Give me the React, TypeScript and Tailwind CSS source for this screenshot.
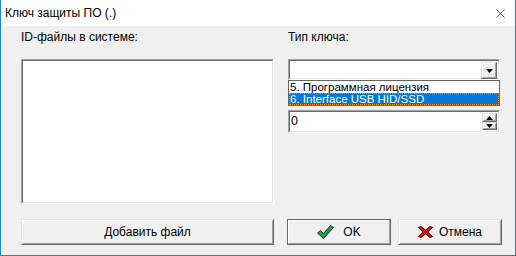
import { X } from 'lucide-react';

// classic win32 sunken / raised frames
function Sunken({ className, children }: { className: string; children?: React.ReactNode }) {
  return (
    <div className={`border border-t-[#a0a0a0] border-l-[#a0a0a0] border-b-white border-r-white ${className}`}>
      <div className="h-full w-full border border-t-[#696969] border-l-[#696969] border-b-[#e3e3e3] border-r-[#e3e3e3] bg-white">
        {children}
      </div>
    </div>
  );
}

function Raised({ className, children }: { className: string; children?: React.ReactNode }) {
  return (
    <div className={`border border-t-[#e3e3e3] border-l-[#e3e3e3] border-b-[#696969] border-r-[#696969] bg-[#f0f0f0] ${className}`}>
      <div className="flex h-full w-full items-center justify-center border border-t-white border-l-white border-b-[#a0a0a0] border-r-[#a0a0a0]">
        {children}
      </div>
    </div>
  );
}

function CheckIcon() {
  return (
    <svg width="17" height="14" viewBox="0 0 17 14">
      <polygon points="0.5,8 3.5,5.5 6.5,8.5 13.5,0.5 16.5,2.5 6.5,13.5" fill="#1fa52a" stroke="#16235e" strokeWidth="1" strokeLinejoin="round" />
    </svg>
  );
}

function CrossIcon() {
  return (
    <svg width="15" height="12" viewBox="0 0 15 12">
      <polygon
        points="0.5,1.5 3,0.5 7.5,4 12,0.5 14.5,1.5 10,6 14.5,10.5 12,11.5 7.5,8 3,11.5 0.5,10.5 5,6"
        fill="#d41414"
        stroke="#5c0a0a"
        strokeWidth="1"
        strokeLinejoin="round"
      />
    </svg>
  );
}

function Arrow({ up }: { up?: boolean }) {
  return (
    <svg width="7" height="4" viewBox="0 0 7 4">
      <polygon points={up ? '3.5,0 7,4 0,4' : '0,0 7,0 3.5,4'} fill="#000" />
    </svg>
  );
}

export default function App() {
  return (
    <div className="flex h-[256px] w-[516px] flex-col border-x border-b border-[#1883d7] bg-white font-['Liberation_Sans',sans-serif] text-black">
      {/* Title bar */}
      <div className="flex h-[26px] shrink-0 items-center justify-between pl-[4px] pr-[7px]">
        <span className="text-[12px]">Ключ защиты ПО (.)</span>
        <X className="h-[15px] w-[15px]" strokeWidth={1} />
      </div>

      {/* Body */}
      <div className="flex flex-1 gap-[13px] bg-[#f0f0f0] pb-[10px] pl-[20px] pt-[4px] text-[12px]">
        {/* Left column */}
        <div className="flex w-[253px] flex-col">
          <div className="h-[14px] leading-[14px]">ID-файлы в системе:</div>
          <Sunken className="mt-[15px] h-[145px]" />
          <Raised className="mt-auto h-[26px]">
            <span>Добавить файл</span>
          </Raised>
        </div>

        {/* Right column */}
        <div className="flex w-[215px] flex-col">
          <div className="h-[14px] pl-px leading-[14px]">Тип ключа:</div>

          {/* Combo box */}
          <Sunken className="ml-px mt-[15px] h-[21px] w-[212px]">
            <div className="flex h-full justify-end p-px">
              <Raised className="h-[17px] w-[16px]">
                <Arrow />
              </Raised>
            </div>
          </Sunken>

          {/* Dropdown list */}
          <div className="ml-px h-[26px] w-[212px] border border-[#646464] bg-white text-[11.5px]">
            <div className="h-[12px] pl-px leading-[12px]">5. Программная лицензия</div>
            <div className="h-[12px] border border-dotted border-[#f08c28] bg-[#0078d7] leading-[10px] text-white">
              6. Interface USB HID/SSD
            </div>
          </div>

          {/* Spin edit */}
          <Sunken className="ml-px mt-[4px] h-[23px] w-[212px]">
            <div className="flex h-full items-center justify-between pl-[1px] pr-px text-[12.5px]">
              <span>0</span>
              <div className="flex h-[17px] w-[15px] flex-col">
                <Raised className="h-[9px] w-[15px]">
                  <Arrow up />
                </Raised>
                <Raised className="h-[8px] w-[15px]">
                  <Arrow />
                </Raised>
              </div>
            </div>
          </Sunken>

          <div className="mt-auto flex gap-[7px]">
            <Raised className="h-[26px] w-[104px] !border-[#696969] !border-t-[#696969]">
              <div className="flex items-center gap-[9px]">
                <CheckIcon />
                <span>OK</span>
              </div>
            </Raised>
            <Raised className="h-[26px] w-[104px]">
              <div className="flex items-center gap-[6px]">
                <CrossIcon />
                <span>Отмена</span>
              </div>
            </Raised>
          </div>
        </div>
      </div>
    </div>
  );
}
